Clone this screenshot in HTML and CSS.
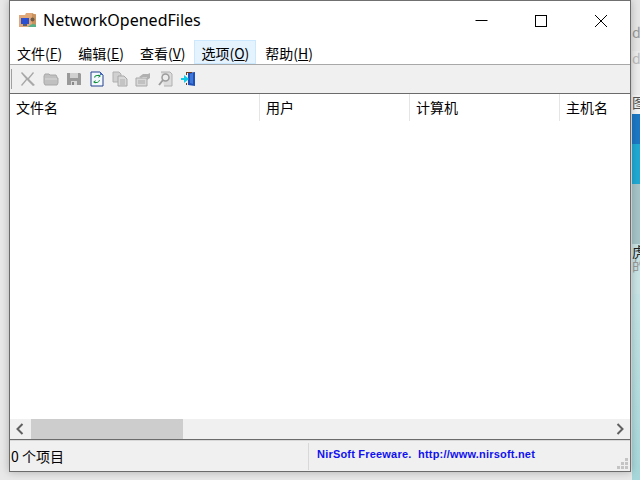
FILE: index.html
```html
<!DOCTYPE html>
<html lang="zh">
<head>
<meta charset="utf-8">
<title>NetworkOpenedFiles</title>
<link rel="stylesheet" href="styles.css">
</head>
<body>
<div class="backdrop">
  <div class="bg-left"></div>
  <div class="bg-right">
    <div class="bg-strip s1"><span>di</span></div>
    <div class="bg-strip s2"><span>di</span></div>
    <div class="bg-strip s3"><span>图</span></div>
    <div class="bg-strip s4"></div>
    <div class="bg-strip s5"></div>
    <div class="bg-strip s6"></div>
    <div class="bg-strip s7"><span class="dark">虎</span><span class="pale">的</span></div>
    <div class="bg-strip s8"></div>
  </div>
</div>
<div class="bg-base"></div>
<main class="window">
  <header class="titlebar">
    <svg class="appicon" viewBox="0 0 20 20" width="20" height="20">
      <path d="M1 5h6l1-2h6l1 1h3v13H1z" fill="#e0a878"/>
      <path d="M14 3l4 2v12h-4z" fill="#c8935f"/>
      <rect x="3" y="8" width="8" height="6" fill="#2a4fd0"/>
      <rect x="5" y="14" width="4" height="2" fill="#506080"/>
      <circle cx="14.500" cy="9.500" r="2" fill="#6b5a48"/>
      <path d="M10 17q4-5 8-2v2z" fill="#58b088"/>
    </svg>
    <h1 class="apptitle">NetworkOpenedFiles</h1>
    <div class="winbtns">
      <svg class="winbtn" viewBox="0 0 46 30" width="46" height="30"><path d="M18.500 18.500h12" stroke="#000" fill="none"/></svg>
      <svg class="winbtn" viewBox="0 0 46 30" width="46" height="30"><rect x="18.500" y="13.500" width="11" height="11" stroke="#000" fill="none"/></svg>
      <svg class="winbtn" viewBox="0 0 46 30" width="46" height="30"><path d="M18 13l12 12M30 13L18 25" stroke="#000" fill="none"/></svg>
    </div>
  </header>
  <nav class="menubar">
    <span class="menu">文件(<u>F</u>)</span>
    <span class="menu">编辑(<u>E</u>)</span>
    <span class="menu">查看(<u>V</u>)</span>
    <span class="menu active">选项(<u>O</u>)</span>
    <span class="menu">帮助(<u>H</u>)</span>
  </nav>
  <div class="toolbar">
    <span class="grip"></span>
    <svg class="tool" viewBox="0 0 16 16"><path d="M2 1l6 6 5-6 1 1-5 6 6 6-2 1-6-6-5 6-1-1 5-6-5-6z" fill="#a8a8a8"/></svg>
    <svg class="tool" viewBox="0 0 16 16"><path d="M1 5l1-2h4l1 1h6l1 2v1h1v5l-1 2H2l-1-2z" fill="#c0c0c0" stroke="#a8a8a8"/><path d="M2 8h12" stroke="#d8d8d8"/></svg>
    <svg class="tool" viewBox="0 0 16 16"><path d="M1 2h13l1 1v11H1z" fill="#9a9a9a"/><rect x="4" y="2" width="8" height="5" fill="#d0d0d0"/><rect x="5" y="10" width="6" height="4" fill="#d8d8d8"/><rect x="6" y="11" width="2" height="3" fill="#888"/></svg>
    <svg class="tool" viewBox="0 0 16 16"><path d="M2 1h9l3 3v11H2z" fill="#f4f8ff" stroke="#23408e"/><path d="M11 1l3 3h-3z" fill="#4a70c8"/><path d="M5 6q1-2 3-2h2l-1-1 3 2-3 2 1-2H8q-2 0-2 2z" fill="#12903a"/><path d="M11 9q-1 3-3 3H6l1 1-3-2 3-2-1 2h2q2 0 2-2z" fill="#12903a"/></svg>
    <svg class="tool" viewBox="0 0 16 16"><path d="M1 1h6l2 2v8H1z" fill="#d0d0d0" stroke="#b0b0b0"/><path d="M6 5h6l3 3v7H6z" fill="#d8d8d8" stroke="#a8a8a8"/><path d="M8 9h5M8 11h5M8 13h5" stroke="#b0b0b0"/></svg>
    <svg class="tool" viewBox="0 0 16 16"><path d="M1 7h11v8H1z" fill="#d8d8d8" stroke="#a8a8a8"/><path d="M3 10h7M3 12h7" stroke="#aaa"/><path d="M4 6l4-3h5l2-1v5l-3 2V6H8L6 7z" fill="#b0b0b0"/></svg>
    <svg class="tool" viewBox="0 0 16 16"><path d="M3 1h9l2 2v12H6" fill="#dcdcdc" stroke="#b0b0b0"/><circle cx="7.500" cy="6.500" r="3.500" fill="#ececec" stroke="#9c9c9c" stroke-width="1.500"/><path d="M5 9l-4 5" stroke="#9c9c9c" stroke-width="2"/></svg>
    <svg class="tool" viewBox="0 0 16 16"><path d="M7 2l7-1v14l-7-1z" fill="#1f50b8"/><path d="M9 3l3-1v11l-3-1z" fill="#3f78d8"/><path d="M5 1h6v1H6v2H5zM5 12h1v2H5z" fill="#703c20"/><path d="M0 7h3V4l5 4-5 4V9H0z" fill="#10c8e8"/></svg>
  </div>
  <div class="listpane">
    <div class="listhead">
      <span class="col c1">文件名</span>
      <span class="col c2">用户</span>
      <span class="col c3">计算机</span>
      <span class="col c4">主机名</span>
    </div>
    <div class="listbody"></div>
    <div class="hscroll">
      <svg class="arrow" viewBox="0 0 20 20" width="21" height="20"><path d="M12 5l-5 5 5 5" stroke="#606060" stroke-width="2" fill="none"/></svg>
      <div class="track"><div class="thumb"></div></div>
      <svg class="arrow" viewBox="0 0 20 20" width="21" height="20"><path d="M8 5l5 5-5 5" stroke="#606060" stroke-width="2" fill="none"/></svg>
    </div>
  </div>
  <footer class="statusbar">
    <span class="count">0 个项目</span>
    <span class="credit">NirSoft Freeware.&nbsp; http://www.nirsoft.net</span>
    <svg class="sizegrip" viewBox="0 0 12 12" width="12" height="12"><path d="M8 0h3v3H8zM4 4h3v3H4zM8 4h3v3H8zM0 8h3v3H0zM4 8h3v3H4zM8 8h3v3H8z" fill="#c4c4c4"/></svg>
  </footer>
</main>
</body>
</html>
```
FILE: styles.css
```css
html, body { margin: 0; padding: 0; width: 640px; height: 480px; overflow: hidden; background: #e8e8e8; }
body { font-family: "Noto Sans CJK SC", "Noto Sans", sans-serif; position: relative; }
.backdrop { position: absolute; inset: 0; display: flex; justify-content: flex-end; }
.bg-right { width: 8px; height: 480px; background: #a9d7da; display: flex; flex-direction: column; overflow: hidden; font-size: 14px; }
.bg-strip { overflow: hidden; line-height: 1; }
.s1 { height: 51px; background: #e6e6e6; color: #999; padding-top: 25px; box-sizing: content-box; height: 26px; }
.s2 { height: 44px; background: #ececec; color: #bbb; }
.s3 { height: 19px; background: #f4f4f4; color: #555; }
.s4 { height: 30px; background: #1c78c4; }
.s5 { height: 40px; background: #21a9d3; }
.s6 { height: 60px; background: #a5c4c7; }
.s7 { height: 50px; background: #c9e2e4; color: #222; display: flex; flex-direction: column; }
.s8 { flex: 1; background: linear-gradient(#c4e2e4, #a6d6d9); }
.pale { color: #999; }
.window { position: absolute; left: 9px; top: 0; width: 622px; height: 472px; box-sizing: border-box; background: #fff; border: 1px solid #6b6b6b; border-top-color: #707070; display: flex; flex-direction: column; box-shadow: 0 0 8px rgba(0,0,0,.25); }
.titlebar { height: 38px; display: flex; align-items: center; padding-left: 8px; background: #fff; }
.appicon { margin-right: 5px; }
.apptitle { margin: 0; font: 400 16px/20px "Noto Sans", sans-serif; color: #000; flex: 1; }
.winbtns { display: flex; align-self: flex-start; margin-top: 1px; margin-right: 7px; gap: 14px; }
.winbtn { display: block; }
.menubar { height: 25px; display: flex; align-items: center; padding-left: 0; background: #fff; border-bottom: 1px solid #a8a8a8; font-size: 14px; color: #000; }
.menu { height: 24px; line-height: 24px; padding: 0 6px; border: 1px solid transparent; box-sizing: border-box; margin-right: 2px; white-space: nowrap; }
.active { background: #e5f3ff; border-color: #cce8ff; }
.toolbar { height: 28px; display: flex; align-items: center; background: #f0f0f0; gap: 7px; border-bottom: 1px solid #6b6b6b; padding-left: 1px; }
.grip { width: 1px; height: 20px; background: #a0a0a0; margin-right: 1px; }
.tool { width: 16px; height: 16px; display: block; }
.listpane { flex: 1; display: flex; flex-direction: column; min-height: 0; }
.listhead { height: 27px; display: flex; background: #fff; font-size: 14px; color: #000; }
.col { box-sizing: border-box; padding-left: 6px; line-height: 27px; border-right: 1px solid #e5e5e5; height: 27px; white-space: nowrap; }
.c1 { width: 250px; }
.c2 { width: 150px; }
.c3 { width: 150px; }
.c4 { flex: 1; border-right: 0; }
.listbody { flex: 1; background: #fff; }
.hscroll { height: 20px; display: flex; background: #f0f0f0; border-bottom: 1px solid #6b6b6b; }
.arrow { flex: none; display: block; }
.track { flex: 1; }
.thumb { width: 152px; height: 20px; background: #cdcdcd; }
.statusbar { height: 31px; box-sizing: border-box; display: flex; align-items: center; background: #f0f0f0; border-top: 1px solid #d8d8d8; position: relative; font-size: 14px; color: #000; }
.count { width: 299px; box-sizing: border-box; padding-left: 1px; height: 27px; line-height: 27px; border-right: 1px solid #d8d8d8; }
.credit { margin-left: 8px; margin-top: -4px; font: 700 11px/14px "Liberation Sans", sans-serif; color: #1010f0; letter-spacing: .2px; }
.sizegrip { position: absolute; right: 1px; bottom: 1px; }
```
